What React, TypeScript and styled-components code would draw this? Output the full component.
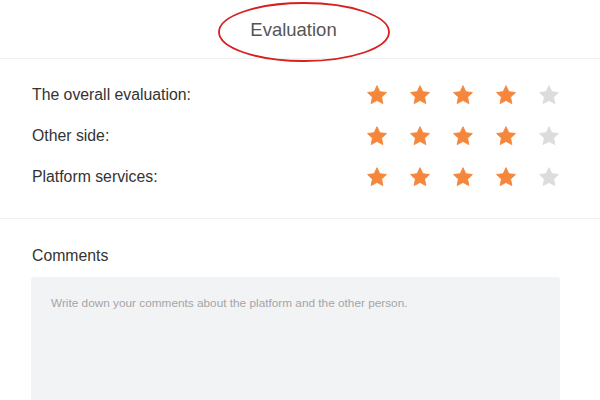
import React from 'react'
import styled, { createGlobalStyle } from 'styled-components'

// CSS

const GlobalStyle = createGlobalStyle`
	html, body {
		margin: 0;
		padding: 0;
		background: #fff;
		font-family: 'Liberation Sans', Arial, sans-serif;
	}
`

const Page = styled.div`
	width: 600px;
	height: 400px;
	overflow: hidden;
	display: flex;
	flex-direction: column;
`

const Header = styled.div`
	position: relative;
	height: 58px;
	display: flex;
	align-items: center;
	justify-content: center;
	border-bottom: 1px solid #f0f0f0;
`

const Title = styled.h1`
	margin: 1px 13px 0 0;
	font-size: 18.5px;
	font-weight: 400;
	color: #555;
`

const Ellipse = styled.svg`
	position: absolute;
	left: 216px;
	top: 1px;
	pointer-events: none;
`

const Ratings = styled.div`
	display: flex;
	flex-direction: column;
	gap: 19px;
	padding: 25px 40px 30px 32px;
	border-bottom: 1px solid #f0f0f0;
`

const Row = styled.div`
	display: flex;
	align-items: center;
	justify-content: space-between;
	height: 22px;
`

const Label = styled.span`
	font-size: 15.8px;
	color: #333;
`

const Stars = styled.div`
	display: flex;
	gap: 21px;
`

const Comments = styled.div`
	flex: 1;
	display: flex;
	flex-direction: column;
	padding: 28px 40px 0 31px;
`

const CommentsTitle = styled.span`
	font-size: 15.8px;
	color: #333;
	margin-left: 1px;
	margin-bottom: 12px;
`

const TextArea = styled.textarea`
	flex: 1;
	border: none;
	outline: none;
	resize: none;
	border-radius: 3px 3px 0 0;
	background: #f2f3f5;
	padding: 19px 20px;
	font-family: 'Liberation Sans', Arial, sans-serif;
	font-size: 11.8px;
	color: #333;

	&::placeholder {
		color: #a5a5a5;
	}
`

// COMPONENT

const Star: React.FC<{ on: boolean }> = ({ on }) => (
	<svg width='22' height='22' viewBox='0 0 24 24'>
		<path
			d='M12 1.8l3.1 6.6 7.2.9-5.3 5 1.4 7.1L12 17.9l-6.4 3.5 1.4-7.1-5.3-5 7.2-.9z'
			fill={on ? '#f5873c' : '#dcdcdc'}
			stroke={on ? '#f5873c' : '#dcdcdc'}
			strokeWidth='1'
			strokeLinejoin='round'
		/>
	</svg>
)

const rows = [
	{ label: 'The overall evaluation:', score: 4 },
	{ label: 'Other side:', score: 4 },
	{ label: 'Platform services:', score: 4 },
]

export default function App() {
	return (
		<Page>
			<GlobalStyle />
			<Header>
				<Title>Evaluation</Title>
				<Ellipse width='176' height='64' viewBox='0 0 176 64'>
					<ellipse cx='88' cy='31' rx='85' ry='29' fill='none' stroke='#d61f1f' strokeWidth='1.8' />
				</Ellipse>
			</Header>
			<Ratings>
				{rows.map((r) => (
					<Row key={r.label}>
						<Label>{r.label}</Label>
						<Stars>
							{[1, 2, 3, 4, 5].map((i) => (
								<Star key={i} on={i <= r.score} />
							))}
						</Stars>
					</Row>
				))}
			</Ratings>
			<Comments>
				<CommentsTitle>Comments</CommentsTitle>
				<TextArea placeholder='Write down your comments about the platform and the other person.' />
			</Comments>
		</Page>
	)
}
